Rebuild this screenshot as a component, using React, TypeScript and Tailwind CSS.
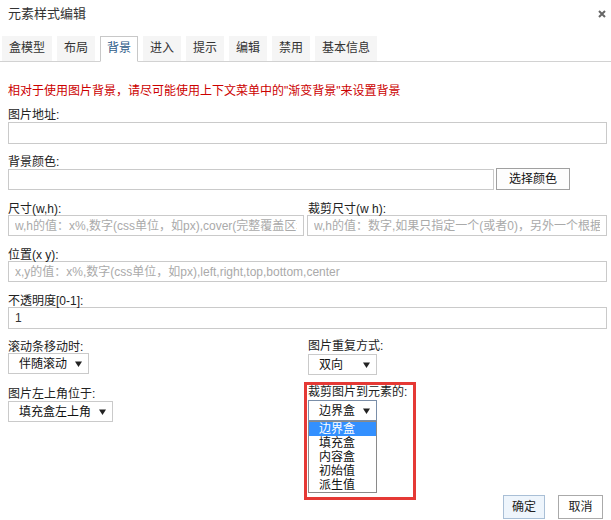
const tabs = ['盒模型', '布局', '背景', '进入', '提示', '编辑', '禁用', '基本信息']

function Label({ children, className = '' }: { children: React.ReactNode; className?: string }) {
  return <div className={`h-[12px] leading-[12px] text-[12px] text-[#222] whitespace-nowrap ${className}`}>{children}</div>
}

function Field({
  placeholder,
  value,
  width = 'w-full',
  height = 'h-[21px]',
  className = '',
}: {
  placeholder?: string
  value?: string
  width?: string
  height?: string
  className?: string
}) {
  return (
    <input
      readOnly
      defaultValue={value}
      placeholder={placeholder}
      className={`block ${width} ${height} border border-[#cacaca] bg-white px-[6px] text-[12px] text-[#333] placeholder:text-[#aaa] outline-none ${className}`}
    />
  )
}

function Arrow() {
  return (
    <svg width="7" height="6" viewBox="0 0 7 6" className="shrink-0">
      <path d="M0 0.5h7L3.5 6z" fill="#222" />
    </svg>
  )
}

function Select({ text, width, focused }: { text: string; width: string; focused?: boolean }) {
  return (
    <div
      className={`flex h-[21px] items-center border bg-white pl-[10px] pr-[6px] text-[12px] text-[#111] ${width} ${
        focused ? 'border-[#7a8ea8]' : 'border-[#cacaca]'
      }`}
    >
      <span className="whitespace-nowrap">{text}</span>
      <span className="ml-auto">
        <Arrow />
      </span>
    </div>
  )
}

export default function App() {
  const options = ['边界盒', '填充盒', '内容盒', '初始值', '派生值']

  return (
    <div
      className="h-[520px] w-[611px] overflow-hidden bg-white text-[12px] text-[#222]"
      style={{ fontFamily: '"Liberation Sans", "Noto Sans CJK SC", sans-serif' }}
    >
      {/* title */}
      <div className="flex h-[28px] items-center justify-between pl-[8px] pr-[4px]">
        <span className="text-[13px] text-[#333]">元素样式编辑</span>
        <svg width="8" height="8" viewBox="0 0 8 8" className="mr-[1px]">
          <path d="M1 1l6 6M7 1L1 7" stroke="#666" strokeWidth="2" />
        </svg>
      </div>

      {/* tabs */}
      <div className="mt-[8px] flex h-[26px] gap-[5px] border-b border-[#d2d2d2] pl-[2px]">
        {tabs.map((t) => (
          <div
            key={t}
            className={
              t === '背景'
                ? '-mb-px h-[26px] border border-[#c8c8c8] border-b-white bg-white px-[6px] leading-[23px] text-[#2d5a88]'
                : 'h-[25px] border border-transparent bg-[#f5f5f5] px-[6px] leading-[23px] text-[#333]'
            }
          >
            {t}
          </div>
        ))}
      </div>

      <div className="pl-[8px] pr-[4px]">
        <div className="mt-[21px] h-[16px] leading-[16px] text-[#cc0000]">
          {'相对于使用图片背景，请尽可能使用上下文菜单中的"渐变背景"来设置背景'}
        </div>

        <Label className="mt-[10px]">图片地址:</Label>
        <Field height="h-[22px]" className="mt-[1px]" />

        <Label className="mt-[12px]">背景颜色:</Label>
        <div className="flex items-center">
          <Field width="w-[486px]" />
          <button className="ml-[2px] h-[22px] w-[74px] border border-[#a0a0a0] bg-[#fdfdfd] text-[12px] text-[#111]">
            选择颜色
          </button>
        </div>

        <div className="mt-[13px] flex">
          <div className="w-[296px]">
            <Label>尺寸(w,h):</Label>
            <Field placeholder="w,h的值：x%,数字(css单位，如px),cover(完整覆盖区域),contain" />
          </div>
          <div className="flex-1 pl-[3px]">
            <Label className="pl-[1px]">裁剪尺寸(w h):</Label>
            <Field placeholder="w,h的值：数字,如果只指定一个(或者0)，另外一个根据比例计算" />
          </div>
        </div>

        <Label className="mt-[13px]">位置(x y):</Label>
        <Field placeholder="x,y的值：x%,数字(css单位，如px),left,right,top,bottom,center" />

        <Label className="mt-[13px]">不透明度[0-1]:</Label>
        <Field value="1" height="h-[22px]" />

        <div className="mt-[12px] flex">
          <div className="w-[296px]">
            <Label>滚动条移动时:</Label>
            <Select text="伴随滚动" width="w-[81px]" />
          </div>
          <div className="flex-1 pl-[4px]">
            <Label className="-mt-[1px]">图片重复方式:</Label>
            <div className="mt-[2px]">
              <Select text="双向" width="w-[69px]" />
            </div>
          </div>
        </div>

        <div className="mt-[7px] flex items-start">
          <div className="w-[296px] pt-[6px]">
            <Label>图片左上角位于:</Label>
            <div className="mt-[1px]">
              <Select text="填充盒左上角" width="w-[105px]" />
            </div>
          </div>
          <div className="w-[112px] border-[3px] border-[#e53935] pb-[4px] pl-[1px]">
            <Label className="mt-[1px]">裁剪图片到元素的:</Label>
            <div className="mt-[2px]">
              <Select text="边界盒" width="w-[69px]" focused />
            </div>
            <div className="w-[69px] border border-[#8a8a8a] bg-white">
              {options.map((o, i) => (
                <div
                  key={o}
                  className={`h-[14px] pl-[10px] text-[12px] leading-[14px] ${
                    i === 0 ? 'bg-[#3390ff] text-white' : 'text-[#111]'
                  }`}
                >
                  {o}
                </div>
              ))}
            </div>
          </div>
          <div className="flex flex-1 justify-end gap-[13px] pt-[113px] pr-[4px]">
            <button className="h-[24px] w-[42px] border border-[#a9bfd6] bg-[#eef5fc] text-[12px] text-[#222]">
              确定
            </button>
            <button className="h-[24px] w-[45px] border border-[#aaaaaa] bg-white text-[12px] text-[#222]">
              取消
            </button>
          </div>
        </div>
      </div>
    </div>
  )
}
